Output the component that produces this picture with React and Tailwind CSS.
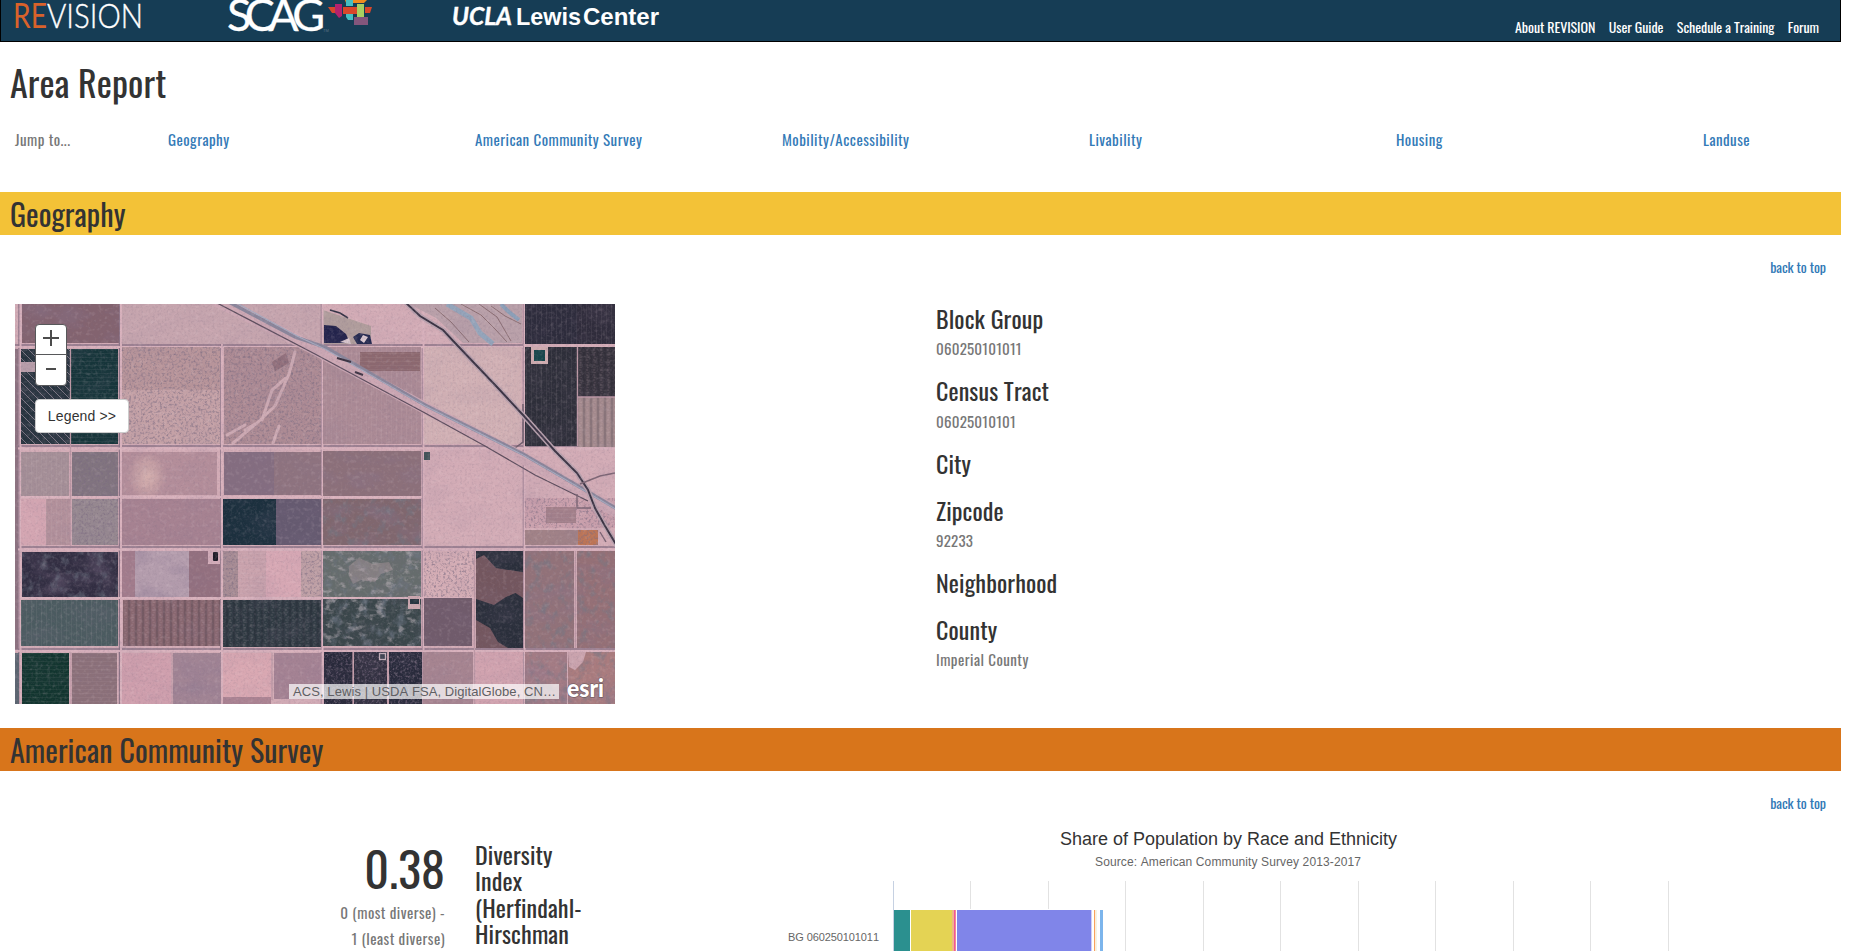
import React from "react";

const jumpLinks = ["Geography", "American Community Survey", "Mobility/Accessibility", "Livability", "Housing", "Landuse"];

const places = [
  ["Block Group", "060250101011"],
  ["Census Tract", "06025010101"],
  ["City", ""],
  ["Zipcode", "92233"],
  ["Neighborhood", ""],
  ["County", "Imperial County"],
];

/* x, y, width, height, colour, texture */
const fields = [
  [7, 0, 97, 39, "#83636f", "m"],
  [0, 45, 3, 300, "#8d7280", ""],
  [6, 45, 49, 95, "#27333e", "d"],
  [6, 58, 15, 10, "#b99faa", ""],
  [56, 45, 47, 95, "#16353a", "h"],
  [107, 43, 98, 43, "#b8959a", "g"],
  [107, 86, 98, 54, "#c4a1a6", "g"],
  [209, 43, 97, 97, "#ad8b94", "g"],
  [308, 43, 98, 97, "#ab8a95", "v"],
  [345, 48, 60, 19, "#8c686f", "h"],
  [409, 43, 97, 97, "#d1b0b4", "v"],
  [510, 0, 52, 40, "#2d2c3c", "v"],
  [562, 0, 38, 40, "#2f2c3b", "v"],
  [510, 43, 52, 99, "#2d2e39", "v"],
  [563, 43, 37, 50, "#38343e", "V"],
  [563, 93, 37, 50, "#a48a8d", "V"],
  [6, 148, 48, 44, "#a58f97", "v"],
  [57, 148, 46, 44, "#81747f", "g"],
  [107, 148, 95, 43, "#b48e9a", ""],
  [209, 148, 50, 43, "#846d80", ""],
  [259, 148, 47, 43, "#8e737f", ""],
  [308, 147, 98, 45, "#8c707a", "m"],
  [6, 195, 25, 46, "#d4a6b2", ""],
  [31, 195, 24, 46, "#b3919b", "v"],
  [57, 195, 46, 46, "#968890", "g"],
  [107, 195, 98, 46, "#a68291", ""],
  [208, 195, 53, 46, "#1c303e", ""],
  [261, 195, 45, 46, "#655a70", ""],
  [308, 195, 98, 46, "#80676e", "b"],
  [510, 194, 90, 30, "#caa0ac", "g"],
  [531, 203, 30, 16, "#a3808a", "h"],
  [510, 226, 54, 15, "#a18287", ""],
  [563, 226, 20, 15, "#bf7554", "g"],
  [7, 248, 96, 45, "#322e42", "b"],
  [107, 247, 13, 46, "#a27c8c", ""],
  [120, 247, 54, 46, "#b49dad", "m"],
  [174, 247, 31, 46, "#93707f", ""],
  [208, 247, 15, 46, "#a78c94", "g"],
  [223, 247, 28, 46, "#c9a2ac", "h"],
  [251, 247, 35, 46, "#d7a8b4", ""],
  [286, 247, 20, 46, "#bfa0a5", "g"],
  [308, 247, 98, 46, "#656c6c", "B"],
  [409, 247, 50, 46, "#d4adb5", "g"],
  [461, 247, 47, 97, "#2a2f3b", ""],
  [510, 247, 49, 97, "#927279", "b"],
  [562, 247, 38, 97, "#957076", "b"],
  [6, 296, 97, 46, "#4b5b60", "v"],
  [108, 296, 97, 46, "#896870", "V"],
  [208, 296, 98, 47, "#303b43", "V"],
  [308, 295, 98, 47, "#3a464a", "B"],
  [409, 294, 48, 48, "#705b6b", ""],
  [0, 349, 4, 51, "#5c6571", ""],
  [7, 349, 47, 51, "#12352f", "h"],
  [57, 349, 45, 51, "#8b7079", "h"],
  [107, 349, 49, 51, "#cf9fad", ""],
  [158, 349, 47, 51, "#a18494", "m"],
  [208, 349, 48, 44, "#d9a8b2", ""],
  [208, 393, 48, 7, "#ab8392", ""],
  [259, 349, 47, 46, "#a48293", ""],
  [309, 348, 29, 52, "#28293a", "g"],
  [339, 348, 33, 52, "#302f3f", "g"],
  [374, 348, 33, 52, "#292b3c", "g"],
  [408, 348, 50, 52, "#a68490", ""],
  [459, 348, 49, 52, "#d1a3af", ""],
  [510, 348, 42, 52, "#a47c84", "b"],
  [553, 348, 47, 52, "#aa7c7e", "b"],
];

const overlays = {
  v: ["url(#vert)"],
  V: ["url(#vertWide)", "url(#speckle)"],
  h: ["url(#horiz)"],
  d: ["url(#diag)"],
};

function Satellite() {
  return (
    <svg width="600" height="400" viewBox="0 0 600 400" className="block">
      <defs>
        <pattern id="vert" width="5" height="8" patternUnits="userSpaceOnUse">
          <path d="M1.5 0v8" stroke="#e8d8dc" strokeOpacity=".07" />
        </pattern>
        <pattern id="vertWide" width="7" height="8" patternUnits="userSpaceOnUse">
          <path d="M2 0v8" stroke="#171722" strokeOpacity=".18" strokeWidth="2.5" />
        </pattern>
        <pattern id="speckle" width="7" height="5" patternUnits="userSpaceOnUse">
          <path d="M5 0v2M6 3v1" stroke="#e8c8cc" strokeOpacity=".15" />
        </pattern>
        <pattern id="horiz" width="8" height="4" patternUnits="userSpaceOnUse">
          <path d="M0 1.5h8" stroke="#e8d8dc" strokeOpacity=".06" />
        </pattern>
        <pattern id="diag" width="8" height="8" patternUnits="userSpaceOnUse">
          <path d="M-1 -1L9 9M-1 7l2 2M7 -1l2 2" stroke="#a597a5" strokeOpacity=".65" strokeWidth="1" />
        </pattern>
        <filter id="darkGrain" x="0" y="0" width="100%" height="100%">
          <feTurbulence type="fractalNoise" baseFrequency=".42" numOctaves="3" seed="4" />
          <feColorMatrix values="0 0 0 0 .2  0 0 0 0 .15  0 0 0 0 .22  2.2 0 0 0 -1.05" />
        </filter>
        <filter id="lightGrain" x="0" y="0" width="100%" height="100%">
          <feTurbulence type="fractalNoise" baseFrequency=".25" numOctaves="3" seed="11" />
          <feColorMatrix values="0 0 0 0 .93  0 0 0 0 .78  0 0 0 0 .8  2 0 0 0 -1.02" />
        </filter>
        <filter id="mottle" x="0" y="0" width="100%" height="100%">
          <feTurbulence type="fractalNoise" baseFrequency=".03 .05" numOctaves="3" seed="8" />
          <feColorMatrix values="0 0 0 0 .25  0 0 0 0 .18  0 0 0 0 .28  1.8 0 0 0 -.78" />
        </filter>
        <filter id="blotch" x="0" y="0" width="100%" height="100%">
          <feTurbulence type="fractalNoise" baseFrequency=".11 .09" numOctaves="4" seed="21" />
          <feColorMatrix values="0 0 0 0 .16  0 0 0 0 .19  0 0 0 0 .24  3.500 0 0 0 -1.75" />
        </filter>
        <filter id="paleBlotch" x="0" y="0" width="100%" height="100%">
          <feTurbulence type="fractalNoise" baseFrequency=".1 .14" numOctaves="4" seed="35" />
          <feColorMatrix values="0 0 0 0 .76  0 0 0 0 .66  0 0 0 0 .7  5 0 0 0 -2.8" />
        </filter>
        <radialGradient id="glow">
          <stop offset="0" stopColor="#efc9bd" />
          <stop offset="1" stopColor="#efc9bd" stopOpacity="0" />
        </radialGradient>
      </defs>
      <rect width="600" height="400" fill="#d3acb6" />
      <rect x="107" width="200" height="40" fill="#c6a5ae" />
      <path d="M308 6l48 16v18h-48z" fill="#b09d9c" />
      <path d="M4 0V400M104.500 0V400M206 40V400M306.500 0V400M407.500 40V400M508.500 0V400M0 41H508M0 142H600M0 243H600M0 345H600" stroke="#8c7386" strokeWidth="1.400" />
      <path d="M5.500 0V400M106 0V400M207 40V400M307.500 0V400M408.500 0V400M509.500 0V400M0 43H508M0 144.500H600M0 245.500H600M0 347H600M5 193H407M5 294H460" stroke="#d9b2bd" strokeWidth="2" />
      {fields.map(([x, y, w, h, c, t], i) => (
        <g key={i}>
          <rect x={x} y={y} width={w} height={h} fill={c} />
          {(overlays[t] || []).map((p) => (
            <rect key={p} x={x} y={y} width={w} height={h} fill={p} />
          ))}
          {t === "g" && <rect x={x} y={y} width={w} height={h} filter="url(#darkGrain)" opacity=".7" />}
          {(t === "m" || t === "b") && <rect x={x} y={y} width={w} height={h} filter="url(#mottle)" opacity=".4" />}
          {t === "b" && <rect x={x} y={y} width={w} height={h} filter="url(#blotch)" opacity=".5" />}
          {t === "B" && <rect x={x} y={y} width={w} height={h} filter="url(#blotch)" opacity=".6" />}
          {t === "B" && <rect x={x} y={y} width={w} height={h} filter="url(#paleBlotch)" opacity=".4" />}
        </g>
      ))}
      {/* bare ground breaking through the green field */}
      <path d="M334 262l10-8 14 6 16-2 4 8-12 4-6 8-14-2-8 4-4-8z" fill="#b49da2" opacity=".4" />
      {/* rust patches in the dark field */}
      <path d="M461 255l8-4 12 13 26 4v18l-16 7-12 8-18-6zM461 316l14 8 8 14 10 6h-32zM496 272l12-4v26l-12-8z" fill="#73565e" />
      <ellipse cx="132" cy="172" rx="20" ry="24" fill="url(#glow)" opacity=".65" />
      {/* pale washes in the scrub */}
      <g fill="none" stroke="#cdaab3" strokeLinecap="round" strokeLinejoin="round">
        <path d="M280 48l-6 22-14 32-18 17-12 7M271 74l-14 12-10 30M242 119l-24 20M230 121l-18 10M264 122l-6 17" strokeWidth="3" />
        <path d="M168 0l-12 16-18 10M180 6l8 16 22 14M136 20l-20 8" strokeWidth="2" opacity=".6" />
      </g>
      <path d="M257 58l14-9 3 10-14 8z" fill="#6b4b5a" opacity=".4" />
      {/* ponds */}
      <path d="M309 21l12 1 10 8 4 9h-26z" fill="#22234b" />
      <path d="M338 33l6-4 11 2 2 9h-15z" fill="#252a50" />
      <path d="M325 38l9-4 2 6zM345 36l3-5 5 2-4 6z" fill="#d9c7cf" />
      <path d="M315 6l10 3 8 5" stroke="#333344" strokeWidth="1.500" fill="none" />
      {/* river strands */}
      <path d="M394 0H507V39H448L421 14z" fill="#b9a0a9" />
      <g fill="none">
        <path d="M432 0l24 14 9 15 13 11" stroke="#94a5bb" strokeWidth="5" />
        <path d="M486 0l8 8 10 8" stroke="#8b9fb8" strokeWidth="4" />
        <path d="M446 0l20 11 14 14 12 13M464 0l18 13 14 24M420 4l16 14 18 20M476 2l14 10 16 8" stroke="#8a6d72" strokeWidth="1" />
      </g>
      <path d="M508 100v38l-8 6" stroke="#6e5c6b" strokeWidth="1.500" fill="none" />
      {/* reservoirs */}
      <rect x="516" y="43" width="17" height="17" fill="#d0adb0" />
      <rect x="519" y="46" width="11" height="11" fill="#15464a" />
      <rect x="409" y="148" width="6" height="8" fill="#3f5257" />
      <rect x="193" y="247" width="12" height="13" fill="#d5aeba" />
      <rect x="198" y="248" width="5" height="9" rx="1" fill="#15151f" />
      <rect x="393" y="292" width="12" height="13" fill="#cda9b0" />
      <rect x="395" y="295" width="9" height="5" fill="#25333d" />
      <rect x="364.500" y="349.500" width="6" height="6" fill="#414553" stroke="#c4b0ba" strokeWidth="1.300" />
      <path d="M553 348h18l-3 10-8 8-6-3z" fill="#cba4ae" />
      {/* divider tracks */}
      <path d="M55.500 45V242M56 349V400M157 349V400M459.500 247V400M560.500 247V344M562.500 43V142M563 93H600M257 349V396M338 348V400M373 348V400" stroke="#bd98a5" strokeWidth="1.300" />
      {/* highway */}
      <g fill="none">
        <path d="M200 -4L290 40 410 104 508 154 568 188 602 208" stroke="#cda8b4" strokeWidth="12" />
        <path d="M210 -4L280 33 310 43 410 101 508 150 570 186 602 205" stroke="#8a869b" strokeWidth="3.500" />
        <path d="M216 -4L284 33 310 45 410 102 508 151 570 187 602 206" stroke="#a5a9be" strokeWidth="1.200" />
        <path d="M202 -1L300 50 410 109 470 142 520 171 573 197" stroke="#5b4c5c" strokeWidth="1.200" />
        <path d="M322 54l14 4M340 68l8 3" stroke="#3c3342" strokeWidth="2" />
        {/* railway */}
        <path d="M390 -2L405 12 428 26 442 41 482 83 508 111 540 147 562 169 573 186 580 204 590 222 602 242" stroke="#b9a2ae" strokeWidth="5" />
        <path d="M390 -2L405 12 428 26 442 41 482 83 508 111 540 147 562 169 573 186 580 204 590 222 602 242" stroke="#3a3343" strokeWidth="1.900" />
        <path d="M565 180l20-8 15-3M562 190v14h14M585 228l6 10" stroke="#7b6473" strokeWidth="1.400" />
      </g>
      <rect width="600" height="400" filter="url(#darkGrain)" opacity=".24" />
      <rect width="600" height="400" filter="url(#lightGrain)" opacity=".18" />
      <rect width="600" height="400" filter="url(#mottle)" opacity=".14" />
    </svg>
  );
}

function MapView() {
  return (
    <div className="relative h-[400px] w-[600px] shrink-0 font-['Liberation_Sans',sans-serif]">
      <Satellite />
      <div className="absolute left-5 top-5 h-[62px] w-8 overflow-hidden rounded border border-[#57585a] bg-white">
        <svg width="30" height="60" viewBox="0 0 30 60" stroke="#4c4c4c" strokeWidth="2">
          <path d="M7 13h16M15 5v16M10 44h10" />
          <path d="M0 29.500h30" stroke="#57585a" strokeWidth="1" />
        </svg>
      </div>
      <button className="absolute left-5 top-[95px] h-[34px] w-[94px] rounded border border-[#cccccc] bg-white text-sm tracking-[0.15px] text-[#333333]">
        Legend &gt;&gt;
      </button>
      <div className="absolute bottom-[5px] right-[56px] h-[15px] w-[270px] whitespace-nowrap bg-white/70 pl-1 text-[13px] leading-[15px] tracking-[0.08px] text-[#5f5f63]">
        ACS, Lewis | USDA FSA, DigitalGlobe, CN…
      </div>
      <svg className="absolute bottom-0 right-2" width="44" height="32">
        <text x="4" y="25" textLength="37" lengthAdjust="spacingAndGlyphs" className="fill-white font-['Lato',sans-serif] text-[24px] font-black" stroke="#33333366" strokeWidth="1.500" paintOrder="stroke">esri</text>
      </svg>
    </div>
  );
}

function Logos() {
  return (
    <svg width="700" height="41" viewBox="1 0 700 41" className="block">
      <text x="13" y="28" textLength="34" lengthAdjust="spacingAndGlyphs" className="fill-[#d9622b] font-['Lato',sans-serif] text-[34px]">RE</text>
      <text x="47" y="28" textLength="96" lengthAdjust="spacingAndGlyphs" className="fill-white font-['Lato',sans-serif] text-[34px] font-light" stroke="#ffffff" strokeWidth=".4">VISION</text>
      <text x="227" y="31" textLength="98" lengthAdjust="spacing" className="fill-white font-['Lato',sans-serif] text-[45px]" stroke="#ffffff" strokeWidth=".3">SCAG</text>
      <path d="M345 0h22l-3 3h-18z" fill="#f08c1e" />
      <path d="M346 0h7v6h-7zM346 14h7v6h-5l-2-3z" fill="#45bfc2" />
      <path d="M328 7h7v6h-3zM343 7h14v7h-14zM365 7h7l-2 6h-5z" fill="#d9472b" />
      <path d="M335 4h7v12l-3 2-4-5z" fill="#b4226e" />
      <path d="M357 4h7v13h-7z" fill="#a9d161" />
      <path d="M354 17h14v8h-14z" fill="#84567c" />
      <text x="323" y="32" className="fill-[#5b7486] font-['Liberation_Sans',sans-serif] text-[4px]">TM</text>
      <text x="452" y="25" textLength="60" lengthAdjust="spacingAndGlyphs" className="fill-white font-['Lato',sans-serif] text-[24px] font-bold italic" stroke="#ffffff" strokeWidth=".4">UCLA</text>
      <text x="516" y="25" textLength="65" lengthAdjust="spacingAndGlyphs" className="fill-white font-['Liberation_Sans',sans-serif] text-[24px] font-bold">Lewis</text>
      <text x="583" y="25" textLength="76" lengthAdjust="spacingAndGlyphs" className="fill-white font-['Liberation_Sans',sans-serif] text-[24px] font-bold">Center</text>
    </svg>
  );
}

const grid = [188, 266, 343, 421, 498, 576, 653, 731, 808, 886];
const bars = [
  [112, 16, "#2b908f"],
  [129, 41, "#e4d354"],
  [170, 2, "#f0b48c"],
  [172, 1, "#f0569b"],
  [173, 1, "#f58a92"],
  [175, 134, "#8085e9"],
  [309, 1, "#cfd0f5"],
  [312, 1, "#f7a35c"],
  [313, 1, "#fdebdc"],
  [314, 1, "#f3f7e2"],
  [318, 3, "#7cb5ec"],
];

function RaceChart() {
  return (
    <svg width="1059" height="140" viewBox="0 0 1059 140" className="block font-['Liberation_Sans',sans-serif]">
      <text x="446.500" y="24" textAnchor="middle" textLength="337" className="fill-[#333333] text-[18px]">Share of Population by Race and Ethnicity</text>
      <text x="446" y="45" textAnchor="middle" textLength="266" className="fill-[#666666] text-[12px]">Source: American Community Survey 2013-2017</text>
      {grid.map((x, i) => (
        <rect key={x} x={x} y="60" width="1" height={i < 2 ? 28 : 80} fill="#e2e2e2" />
      ))}
      <rect x="111" y="60" width="1" height="80" fill="#c6d1e2" />
      {bars.map(([x, w, c]) => (
        <rect key={x} x={x} y="89" width={w} height="51" fill={c} />
      ))}
      <text x="97" y="120" textAnchor="end" textLength="91" className="fill-[#666666] text-[11px]">BG 060250101011</text>
    </svg>
  );
}

function SectionHeader({ title, className }) {
  return (
    <>
      <h2 className={`h-[43px] px-2.5 pt-[5px] text-[30px] leading-[33px] tracking-[0.05px] ${className}`}>{title}</h2>
      <div className="mt-[22px] px-[15px] text-right text-sm leading-5 tracking-[-0.1px]">
        <a className="text-[#337ab7]">back to top</a>
      </div>
    </>
  );
}

export default function App() {
  return (
    <div className="h-[951px] w-full overflow-hidden bg-white">
      <div className="w-[1841px] font-['Oswald',sans-serif] font-normal text-[#333333] [font-kerning:none]">
        <header className="flex h-[42px] justify-between border border-t-0 border-black bg-[#163d55]">
          <Logos />
          <nav className="flex gap-[13.5px] pr-[21px] pt-[17px] text-sm leading-5 tracking-[-0.08px] text-white">
            <a>About REVISION</a>
            <a>User Guide</a>
            <a>Schedule a Training</a>
            <a>Forum</a>
          </nav>
        </header>

        <h1 className="mt-5 px-2.5 text-4xl leading-[39.6px] tracking-[0.1px]">Area Report</h1>

        <div className="mt-[24.4px] flex pl-[15px] text-[15px] leading-[26px] tracking-[0.45px]">
          <div className="w-[153px] shrink-0 text-[#777777]">Jump to...</div>
          {jumpLinks.map((l) => (
            <a key={l} className="w-[307px] shrink-0 text-[#337ab7]">{l}</a>
          ))}
        </div>

        <section className="mt-10">
          <SectionHeader title="Geography" className="bg-[#f3c237]" />
          <div className="mt-[27px] flex h-[424px] px-[15px]">
            <MapView />
            <div className="ml-[321px] pt-px">
              {places.map(([name, value]) => (
                <div key={name} className={value ? "h-[72.3px]" : "h-[47px]"}>
                  <h3 className="text-2xl leading-[26.4px] tracking-[0.12px]">{name}</h3>
                  {value && (
                    <p className={`pt-1 text-[15px] leading-[26px] text-[#777777] ${/^\d/.test(value) ? "tracking-[0.2px]" : "tracking-[0.45px]"}`}>{value}</p>
                  )}
                </div>
              ))}
            </div>
          </div>
        </section>

        <section>
          <SectionHeader title="American Community Survey" className="bg-[#d8751b]" />
          <div className="mt-2 flex">
            <div className="w-[445px] shrink-0 pt-5 text-right">
              <div className="text-5xl leading-[53px]">0.38</div>
              <p className="mt-[5px] text-[15px] leading-[26px] tracking-[0.45px] text-[#777777]">
                0 (most diverse) -<br />1 (least diverse)
              </p>
            </div>
            <h3 className="ml-[30px] w-[307px] shrink-0 pt-5 text-2xl leading-[26.4px] tracking-[0.12px]">
              Diversity<br />Index<br />(Herfindahl-<br />Hirschman
            </h3>
            <RaceChart />
          </div>
        </section>
      </div>
    </div>
  );
}
